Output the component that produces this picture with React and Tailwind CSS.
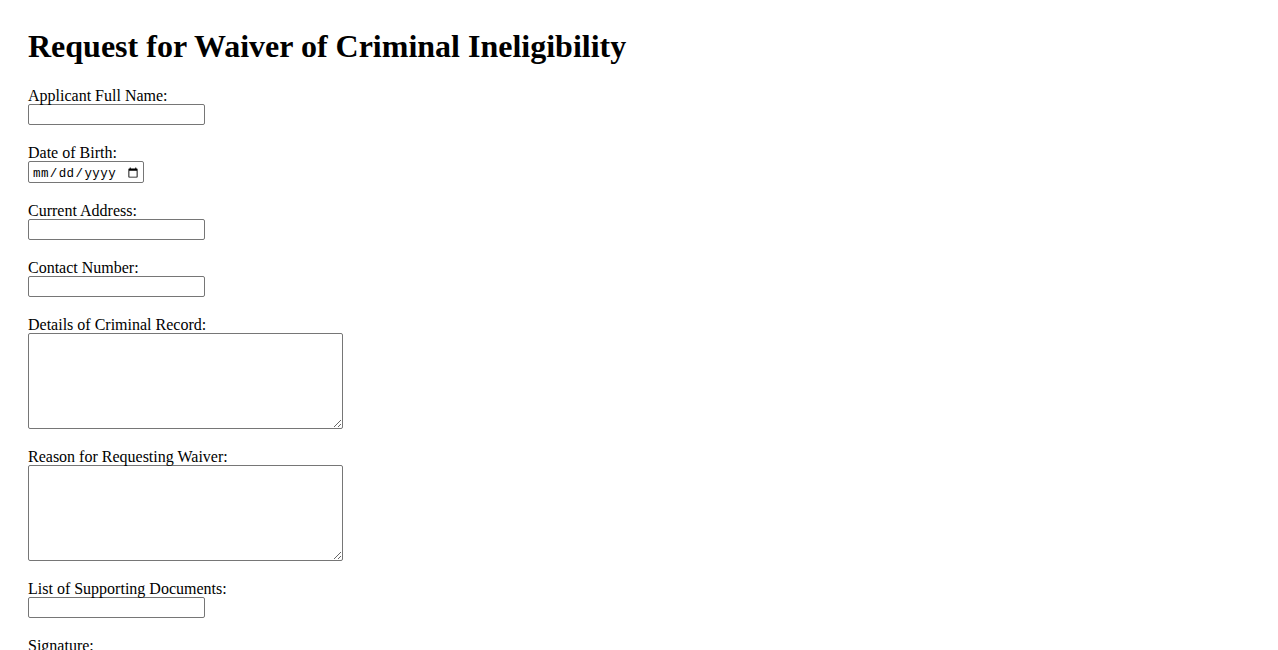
const serif = "font-['Liberation_Serif','Times_New_Roman',serif]"

const fields = [
  { id: 'fullName', label: 'Applicant Full Name:', type: 'text' },
  { id: 'dob', label: 'Date of Birth:', type: 'date' },
  { id: 'address', label: 'Current Address:', type: 'text' },
  { id: 'contact', label: 'Contact Number:', type: 'tel' },
  { id: 'record', label: 'Details of Criminal Record:', type: 'textarea' },
  { id: 'reason', label: 'Reason for Requesting Waiver:', type: 'textarea' },
  { id: 'documents', label: 'List of Supporting Documents:', type: 'text' },
  { id: 'signature', label: 'Signature:', type: 'text' },
  { id: 'signedOn', label: 'Date:', type: 'date' },
]

function Field({ field }) {
  let control
  if (field.type === 'textarea') {
    control = (
      <textarea
        id={field.id}
        className="block w-[315px] h-[96px] border border-[#767676] rounded-[2px] bg-white px-[2px] py-[1px] text-[13.333px] font-['DejaVu_Sans_Mono',monospace]"
      />
    )
  } else if (field.type === 'date') {
    control = (
      <input
        id={field.id}
        type="date"
        className="block w-[116px] h-[22px] border border-[#767676] rounded-[2px] bg-white pl-[3px] pr-[2px] pt-[3px] pb-0 text-[12.5px] leading-[16px] tracking-[0.4px] text-black font-['Liberation_Mono',monospace]"
      />
    )
  } else {
    control = (
      <input
        id={field.id}
        type={field.type}
        className="block w-[177px] h-[21px] border border-[#767676] rounded-[2px] bg-white px-[2px] text-[13.333px] font-['Liberation_Sans',Arial,sans-serif]"
      />
    )
  }

  return (
    <div className="mb-[18px]">
      <label htmlFor={field.id} className="block h-[18px] pt-px text-[16px] leading-[18px] text-black">
        {field.label}
      </label>
      {control}
    </div>
  )
}

export default function App() {
  return (
    <div className={`min-h-screen bg-white px-[28px] pt-[28px] pb-8 text-black ${serif}`}>
      <h1 className="text-[32px] font-bold leading-[37px] mb-[21px]">
        Request for Waiver of Criminal Ineligibility
      </h1>
      <form>
        {fields.map((f) => (
          <Field key={f.id} field={f} />
        ))}
        <button
          type="submit"
          className="border border-[#767676] rounded-[2px] bg-[#efefef] px-[6px] py-[1px] text-[13.333px] font-['Liberation_Sans',Arial,sans-serif]"
        >
          Submit Request
        </button>
      </form>
    </div>
  )
}
